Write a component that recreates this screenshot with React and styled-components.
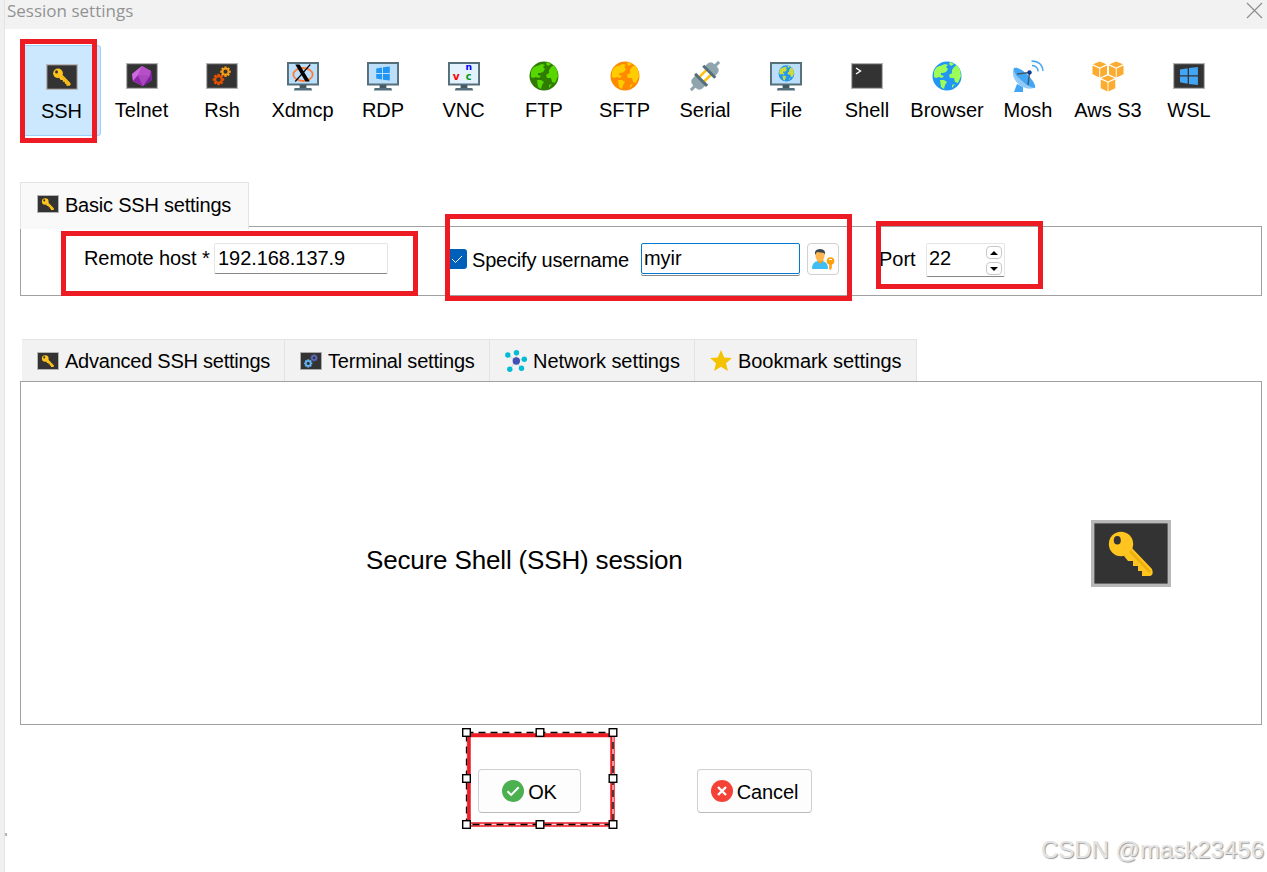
/**
 * @filename : App.jsx
 * @description : Session settings 창 화면 정의
 */

import React, { memo } from 'react';
import styled, { createGlobalStyle } from 'styled-components';

const GlobalStyle = createGlobalStyle`
  * {
    box-sizing: border-box;
  }

  body {
    margin: 0;
    background: #fff;
    color: #000;
    font: 20px/24px 'Liberation Sans', Arial, sans-serif;
    overflow: hidden;
  }

  svg {
    display: block;
    flex: none;
  }
`;

const Window = styled.div`
  position: relative;
  width: 1267px;
  height: 872px;
  border-left: 4px solid #f0f0f0;
  background: #fff;
  overflow: hidden;
`;

const WindowBody = styled.div`
  height: 872px;
  border-left: 1px solid #e3e3e3;
`;

const TitleBar = styled.header`
  display: flex;
  justify-content: space-between;
  height: 29px;
  padding: 0 4px 0 2px;
  background: #f2f2f2;
  color: #929292;
  font: 17px/22px 'Open Sans', sans-serif;

  svg {
    margin-top: 2px;
  }
`;

const Toolbar = styled.nav`
  display: flex;
  gap: 0.5px;
  padding: 16px 0 0 16px;
`;

const ToolItem = styled.div`
  display: flex;
  flex-direction: column;
  align-items: center;
  width: 80px;
  height: 91px;
  padding-top: ${({ $active }) => ($active ? 15 : 14)}px;
  padding-left: ${({ $nudge }) => $nudge || 0}px;
  border: 1px solid ${({ $active }) => ($active ? '#99d1ff' : 'transparent')};
  border-radius: 3px;
  background: ${({ $active }) => ($active ? '#cce8ff' : 'transparent')};
  white-space: nowrap;

  span {
    margin-top: 6px;
  }
`;

const IconSlot = styled.div`
  display: grid;
  place-items: center;
  height: 32px;
  margin-left: 0.8px;
`;

const Section = styled.section`
  width: 1242px;
  margin: ${({ $top }) => $top}px 0 0 15px;
`;

const TabList = styled.div`
  display: flex;
  padding-left: 2px;
`;

const Tab = styled.div`
  display: flex;
  align-items: center;
  gap: 6px;
  width: ${({ $width }) => $width}px;
  height: 42px;
  padding-left: 15px;
  border: solid #e3e3e3;
  border-width: 1px 1px 0 0;
  background: #f2f2f2;
  letter-spacing: ${({ $spacing }) => $spacing || 0}px;
  white-space: nowrap;
`;

const BasicTab = styled(Tab)`
  position: relative;
  z-index: 1;
  height: 47px;
  margin-bottom: -3px;
  padding: 0 0 3px 16px;
  border-width: 1px 1px 0 1px;
  background: #f9f9f9;

  svg {
    margin-bottom: 2px;
  }
`;

const BasicBox = styled.div`
  display: flex;
  align-items: flex-start;
  height: 70px;
  padding: 16px 0 0 63px;
  border: 1px solid #a0a0a0;
  white-space: nowrap;
`;

const Panel = styled.div`
  display: flex;
  justify-content: space-between;
  height: 344px;
  padding: 138px 90px 0 345px;
  border: 1px solid #a0a0a0;
  font-size: 26px;
  line-height: 80px;
  letter-spacing: -0.16px;
`;

const Label = styled.label`
  width: ${({ $width }) => $width}px;
  padding-top: ${({ $drop }) => $drop}px;
  letter-spacing: ${({ $spacing }) => $spacing || 0}px;
`;

const Field = styled.div`
  width: 174px;
  height: 31px;
  padding: 2px 0 0 3px;
  border: 1px solid #e5e5e5;
  border-bottom-color: #868686;
  border-radius: 2px;
  background: #fff;
  letter-spacing: -0.06px;
`;

const FocusedField = styled(Field)`
  width: 159px;
  padding-left: 2px;
  border: 1px solid #0078d4;
  box-shadow: 0 1px 0 0 #fff, 0 2px 0 0 #868686;
`;

const CheckBox = styled.div`
  display: grid;
  place-items: center;
  width: 20px;
  height: 20px;
  margin: 6px 5px 0 59px;
  border-radius: 3px;
  background: #005fb8;
`;

const UserButton = styled.div`
  width: 32px;
  height: 32px;
  margin: 0 40px 0 7px;
  border: 1px solid #d0d0d0;
  border-radius: 4px;
  background: #fdfdfd;
`;

const SpinField = styled(Field)`
  display: flex;
  justify-content: space-between;
  width: 79px;
  height: 34px;
  padding: 2px 2px 0 2px;
`;

const SpinButtons = styled.div`
  display: grid;
  gap: 2px;
`;

const SpinButton = styled.div`
  display: grid;
  place-items: center;
  width: 16px;
  height: 13px;
  border: 1px solid #c8c8c8;
  border-radius: 4px;
`;

const Footer = styled.footer`
  display: flex;
  gap: 116px;
  padding: 44px 0 0 473px;
`;

const Button = styled.div`
  display: flex;
  align-items: center;
  justify-content: center;
  gap: 4px;
  width: ${({ $width }) => $width}px;
  height: 44px;
  border: 1px solid #d0d0d0;
  border-bottom-color: #bababa;
  border-radius: 4px;
  background: #fdfdfd;

  span {
    padding-top: 2px;
    letter-spacing: -0.1px;
  }
`;

// 화면 위에 겹쳐지는 빨간 강조 박스
const Highlight = styled.div`
  position: absolute;
  z-index: 2;
  top: ${({ $y }) => $y}px;
  left: ${({ $x }) => $x - 4}px;
  width: ${({ $w }) => $w}px;
  height: ${({ $h }) => $h}px;
  border: 5px solid #ed1c24;
`;

const Selection = styled.div`
  position: absolute;
  z-index: 2;
  top: 728px;
  left: 458px;
`;

const Watermark = styled.div`
  position: absolute;
  right: 3px;
  bottom: 6px;
  color: #e4e4e4;
  font: 24px/32px 'Liberation Sans', Arial, sans-serif;
  text-shadow: 1px 1px 1px #999;
`;

const EdgeMark = styled.div`
  position: absolute;
  top: 833px;
  left: 1px;
  width: 2px;
  height: 3px;
  background: #b5b5b5;
`;

const gearAngles = [0, 45, 90, 135, 180, 225, 270, 315];

const Gear = ({ x, y, r, color }) => (
  <g transform={`translate(${x} ${y})`} fill={color}>
    {gearAngles.map((angle) => (
      <rect key={angle} x={-r * 0.22} y={-r} width={r * 0.44} height={r * 0.5} transform={`rotate(${angle})`} />
    ))}
    <circle r={r * 0.58} fill="none" stroke={color} strokeWidth={r * 0.36} />
  </g>
);

const Screen = ({ width = 32, height = 26, children }) => (
  <svg width={width} height={height} viewBox="0 0 32 26" preserveAspectRatio="none">
    <rect x=".6" y=".6" width="30.8" height="24.8" fill="#333" stroke="#b3b3b3" strokeWidth="1.2" />
    {children}
  </svg>
);

const KeyIcon = ({ width = 32, height = 26 }) => (
  <svg width={width} height={height} viewBox="0 0 80 67" preserveAspectRatio="none">
    <rect x="1.7" y="1.7" width="76.6" height="63.6" fill="#333" stroke="#b8b8b8" strokeWidth="3.4" />
    <path d="M41 28 61 49Q63 55 59 56H51V51H47V46H42V41H37L33 36Z" fill="#ffc41f" />
    <circle cx="30" cy="24" r="12.2" fill="#ffc41f" />
    <path d="m39 31 20 21" stroke="#edb011" strokeWidth="2.6" />
    <ellipse cx="26.3" cy="20.3" rx="3.5" ry="4.3" fill="#333" />
  </svg>
);

const Land = ({ color }) => (
  <g fill={color}>
    <path d="M2 11C3 7 6 5 8 5L13 3 16 4 14 6 16 8 14 11 11 12 9 12 9 14 12 15 10 17 7 16 4 17 2 16Z" />
    <path d="M18 17 17 14 20 12 20 9 22 6 25 4 28 9 29 15 26 22 23 21 22 17Z" />
    <path d="M8 19 12 19 15 21 13 24 12 28 9 26Z" />
    <path d="m18 1 4 2-3 2-2-2ZM20 24l3-1-3 4Z" />
  </g>
);

const Globe = ({ sea, land }) => (
  <svg width="30" height="30" viewBox="0 0 30 30">
    <circle cx="15" cy="15" r="14.5" fill={sea} />
    <Land color={land} />
  </svg>
);

const Monitor = ({ fill = '#bbdefb', children }) => (
  <svg width="32" height="30" viewBox="0 0 33 30" preserveAspectRatio="none">
    <rect x="1" y="2" width="31" height="21.5" fill={fill} stroke="#546e7a" strokeWidth="2" />
    <path d="M13 24h7v3h-7z" fill="#455a64" />
    <path d="M8 27h17l1 2.5H7z" fill="#546e7a" />
    {children}
  </svg>
);

const WinLogo = ({ x, y, color }) => (
  <g transform={`translate(${x} ${y})`} fill={color}>
    <path d="M0 2 6 1V6.5H0ZM7 .8 14 0V6.5H7ZM0 7.5H6V13L0 12ZM7 7.5H14V14L7 13.2Z" />
  </g>
);

const TelnetIcon = () => (
  <Screen>
    <path d="m16 3 9 5 1 9-9 6-10-5-1-7Z" fill="#ab47bc" />
    <path d="m16 3-4 9 5 11-10-5-1-7Z" fill="#ce6ae0" />
    <path d="m16 3 9 5-1 5-12-1Z" fill="#b64fc8" />
    <path d="m12 12-5 6 10 5Z" fill="#8e24aa" />
    <path d="m12 12 12 1-7 10Z" fill="#ab47bc" />
    <path d="m24 13 1-5 1 9-9 6Z" fill="#7b1fa2" />
  </Screen>
);

const RshIcon = () => (
  <Screen>
    <Gear x={19.5} y={8.7} r={5.2} color="#fb9e12" />
    <Gear x={12.5} y={16.5} r={5.7} color="#e65100" />
  </Screen>
);

const XdmcpIcon = () => (
  <Monitor>
    <ellipse cx="16.5" cy="13.5" rx="10" ry="6.5" fill="none" stroke="#ff7a35" strokeWidth="1.8" />
    <path d="M8.500 3.500h4.500l10.500 17h-4.500Z" fill="#000" />
    <path d="M24 3.500 8.500 20.500" stroke="#000" strokeWidth="1.200" />
  </Monitor>
);

const RdpIcon = () => (
  <Monitor>
    <WinLogo x={9.5} y={5.5} color="#2196f3" />
  </Monitor>
);

const VncIcon = () => (
  <Monitor fill="#e3f2fd">
    <g fontFamily="DejaVu Sans, sans-serif" fontWeight="700">
      <text x="5" y="19" fontSize="11" fill="#f00">v</text>
      <text x="18" y="9.500" fontSize="9.500" fill="#00f">n</text>
      <text x="18.200" y="19.500" fontSize="10" fill="#009c16">c</text>
    </g>
  </Monitor>
);

const SerialIcon = () => (
  <svg width="32" height="32" viewBox="0 0 32 32">
    <g transform="rotate(45 16 16)">
      <path d="M14.500 -4h3v8h-3zM14.500 28h3v8h-3z" fill="#90a4ae" />
      <path d="M9 10V6q0-5 5-5h4q5 0 5 5v4zM9 22v4q0 5 5 5h4q5 0 5-5v-4z" fill="#90a4ae" />
      <path d="M11.500 11h2.500v9h-2.500zM18 11h2.500v9H18z" fill="#ffc107" />
      <path d="M7.500 8.500h17v3h-17zM7.500 20h17v3h-17z" fill="#546e7a" />
    </g>
  </svg>
);

const FileIcon = () => (
  <Monitor>
    <g transform="translate(8.5 4) scale(.56)">
      <circle cx="15" cy="15" r="14.5" fill="#2196f3" />
      <Land color="#cddc39" />
    </g>
  </Monitor>
);

const ShellIcon = () => (
  <Screen>
    <path d="m5 5 4.500 3L5 11" fill="none" stroke="#fff" strokeWidth="1.4" />
  </Screen>
);

const MoshIcon = () => (
  <svg width="32" height="32" viewBox="0 0 32 32">
    <path d="m5 24 6 3v5H2Z" fill="#42a5f5" />
    <path d="M2 8C-3 17 9 32 22 28Z" fill="#90caf9" />
    <path d="M2 8C8 5 25 22 23 28 18 29 0 15 2 8Z" fill="#42a5f5" />
    <path d="M5 14 17.500 12.500 16 25" fill="none" stroke="#455a64" strokeWidth="1.4" />
    <circle cx="17.500" cy="12.500" r="2.200" fill="#0d3c93" />
    <path d="M20 5.500q6 .5 6 6M19.500 1q11 .5 11.500 10" fill="none" stroke="#42a5f5" strokeWidth="1.300" />
  </svg>
);

const Cube = ({ x, y }) => (
  <g transform={`translate(${x} ${y})`} fill="#fbab2e">
    <path d="m7.500 0 7 2.800-7 3.200-7-3.200ZM0 4l7 3v9l-7-3.300ZM8 7l7-3v8.700L8 16Z" />
  </g>
);

const AwsIcon = () => (
  <svg width="32" height="31" viewBox="0 0 33 31" preserveAspectRatio="none">
    <Cube x={0.5} y={0.5} />
    <Cube x={17.5} y={0.5} />
    <Cube x={9} y={14.5} />
  </svg>
);

const WslIcon = () => (
  <Screen>
    <g transform="translate(7 4) scale(1.28)">
      <WinLogo x={0} y={0} color="#42a5f5" />
    </g>
  </Screen>
);

const TerminalIcon = () => (
  <Screen width={22} height={18}>
    <Gear x={20.5} y={8.5} r={5.2} color="#5c6bc0" />
    <Gear x={12} y={16.5} r={6} color="#64b5f6" />
  </Screen>
);

const NetworkIcon = () => (
  <svg width="22" height="22" viewBox="0 0 22 22">
    <path d="M11 11 3 5M11 11V3M11 11l8-2M11 11 5 19M11 11l5 7" stroke="#cfd8dc" strokeWidth="1.2" />
    <g fill="#00bcd4">
      <circle cx="2.800" cy="5" r="2.700" />
      <circle cx="11.500" cy="2.700" r="2.700" />
      <circle cx="19.300" cy="9.300" r="2.700" />
      <circle cx="16.500" cy="18.300" r="2.700" />
      <circle cx="4.800" cy="19.300" r="2.700" />
    </g>
    <circle cx="11.300" cy="11" r="3.700" fill="#3f51b5" />
  </svg>
);

const StarIcon = () => (
  <svg width="22" height="22" viewBox="0 0 22 22">
    <path d="m11 0 3.200 7.500 7.800.6-6 5.200 1.900 7.700L11 16.800 4.100 21 6 13.300 0 8.100l7.800-.6Z" fill="#f4c300" />
  </svg>
);

const UserKeyIcon = () => (
  <svg width="30" height="30" viewBox="0 0 30 30">
    <path d="M4 25q0-8 7-8h2q7 0 7 8Z" fill="#3fbdf5" />
    <path d="m9 16 3 4 4-4Z" fill="#ff9800" />
    <ellipse cx="12" cy="11.500" rx="4.500" ry="6" fill="#ffb74d" />
    <path d="M7 11q-1-6 5-6 6 0 5 6l-1-2-7-1Z" fill="#37474f" />
    <circle cx="22.500" cy="17" r="3.800" fill="#ff9f0a" />
    <path d="M21.200 18h2.600v6l-1.300 2-1.300-1Z" fill="#ff9f0a" />
    <path d="M21 15.500h3" stroke="#fff" />
  </svg>
);

const OkIcon = () => (
  <svg width="22" height="22" viewBox="0 0 22 22">
    <circle cx="11" cy="11" r="11" fill="#4caf50" />
    <path d="m5.500 11.300 3.700 3.600 7.500-7.700" fill="none" stroke="#fff" strokeWidth="2" />
  </svg>
);

const CancelIcon = () => (
  <svg width="22" height="22" viewBox="0 0 22 22">
    <circle cx="11" cy="11" r="11" fill="#f44336" />
    <path d="m7 7 8 8M15 7l-8 8" stroke="#fff" strokeWidth="2.400" />
  </svg>
);

const SpinArrow = ({ down }) => (
  <svg width="8" height="4" viewBox="0 0 8 4">
    <path d={down ? 'M0 0h8L4 4Z' : 'M0 4h8L4 0Z'} />
  </svg>
);

const tools = [
  { name: 'SSH', icon: <KeyIcon />, active: true, nudge: 1 },
  { name: 'Telnet', icon: <TelnetIcon /> },
  { name: 'Rsh', icon: <RshIcon /> },
  { name: 'Xdmcp', icon: <XdmcpIcon /> },
  { name: 'RDP', icon: <RdpIcon /> },
  { name: 'VNC', icon: <VncIcon /> },
  { name: 'FTP', icon: <Globe sea="#2e7d00" land="#58d600" /> },
  { name: 'SFTP', icon: <Globe sea="#ff8a00" land="#ffcc00" /> },
  { name: 'Serial', icon: <SerialIcon /> },
  { name: 'File', icon: <FileIcon />, nudge: 1 },
  { name: 'Shell', icon: <ShellIcon />, nudge: 2 },
  { name: 'Browser', icon: <Globe sea="#2196f3" land="#9cff57" />, nudge: 1 },
  { name: 'Mosh', icon: <MoshIcon />, nudge: 2 },
  { name: 'Aws S3', icon: <AwsIcon />, nudge: 1 },
  { name: 'WSL', icon: <WslIcon />, nudge: 2 },
];

const handles = [
  [4.5, 4.5], [78, 4.5], [151, 4.5],
  [4.5, 50.5], [151, 50.5],
  [4.5, 96.5], [78, 96.5], [151, 96.5],
];

const SelectionFrame = () => (
  <Selection>
    <svg width="156" height="101" viewBox="0 0 156 101">
      <path d="M4 7H150.500V96.500H6.500V5" fill="none" stroke="#ed1c24" strokeWidth="4.500" />
      <path d="M4.500 4.500H151V96.500H4.500Z" fill="none" stroke="#fff" strokeOpacity=".8" strokeWidth="1.300" />
      <path d="M4.500 4.500H151V96.500H4.500Z" fill="none" stroke="#000" strokeWidth="1.300" strokeDasharray="7 5" />
      {handles.map(([x, y]) => (
        <rect key={`${x}-${y}`} x={x - 3.8} y={y - 3.8} width="7.600" height="7.600" fill="#fff" stroke="#000" strokeWidth="1.400" />
      ))}
    </svg>
  </Selection>
);

const App = () => {
  return (
    <>
      <GlobalStyle />
      <Window>
        <WindowBody>
          <TitleBar>
            <span>Session settings</span>
            <svg width="17" height="17" viewBox="0 0 17 17">
              <path d="m1 1 15 15M16 1 1 16" stroke="#8d8d8d" strokeWidth="1.200" />
            </svg>
          </TitleBar>

          <Toolbar>
            {tools.map(({ name, icon, active, nudge }) => (
              <ToolItem key={name} $active={active} $nudge={nudge}>
                <IconSlot>{icon}</IconSlot>
                <span>{name}</span>
              </ToolItem>
            ))}
          </Toolbar>

          <Section $top={46}>
            <BasicTab $width={229} $spacing={-0.22}>
              <KeyIcon width={22} height={18} />
              Basic SSH settings
            </BasicTab>
            <BasicBox>
              <Label $width={130} $drop={3} $spacing={-0.08}>Remote host *</Label>
              <Field>192.168.137.9</Field>
              <CheckBox>
                <svg width="12" height="9" viewBox="0 0 12 9">
                  <path d="m1 4 3.500 3.500L11 1" fill="none" stroke="#fff" />
                </svg>
              </CheckBox>
              <Label $width={169} $drop={5} $spacing={-0.2}>Specify username</Label>
              <FocusedField>myir</FocusedField>
              <UserButton><UserKeyIcon /></UserButton>
              <Label $width={47} $drop={4}>Port</Label>
              <SpinField>
                22
                <SpinButtons>
                  <SpinButton><SpinArrow /></SpinButton>
                  <SpinButton><SpinArrow down /></SpinButton>
                </SpinButtons>
              </SpinField>
            </BasicBox>
          </Section>

          <Section $top={43}>
            <TabList>
              <Tab $width={263} $spacing={-0.24}>
                <KeyIcon width={22} height={18} />
                Advanced SSH settings
              </Tab>
              <Tab $width={205} $spacing={-0.2}>
                <TerminalIcon />
                Terminal settings
              </Tab>
              <Tab $width={205} $spacing={-0.06}>
                <NetworkIcon />
                Network settings
              </Tab>
              <Tab $width={222} $spacing={-0.06}>
                <StarIcon />
                Bookmark settings
              </Tab>
            </TabList>
            <Panel>
              <span>Secure Shell (SSH) session</span>
              <KeyIcon width={80} height={67} />
            </Panel>
          </Section>

          <Footer>
            <Button $width={103}><OkIcon /><span>OK</span></Button>
            <Button $width={115}><CancelIcon /><span>Cancel</span></Button>
          </Footer>
        </WindowBody>

        <Highlight $x={20} $y={39} $w={77} $h={104} />
        <Highlight $x={61} $y={231} $w={357} $h={65} />
        <Highlight $x={445} $y={214} $w={407} $h={87} />
        <Highlight $x={876} $y={221} $w={167} $h={68} />
        <SelectionFrame />
        <EdgeMark />
        <Watermark>CSDN @mask23456</Watermark>
      </Window>
    </>
  );
};

export default memo(App);
